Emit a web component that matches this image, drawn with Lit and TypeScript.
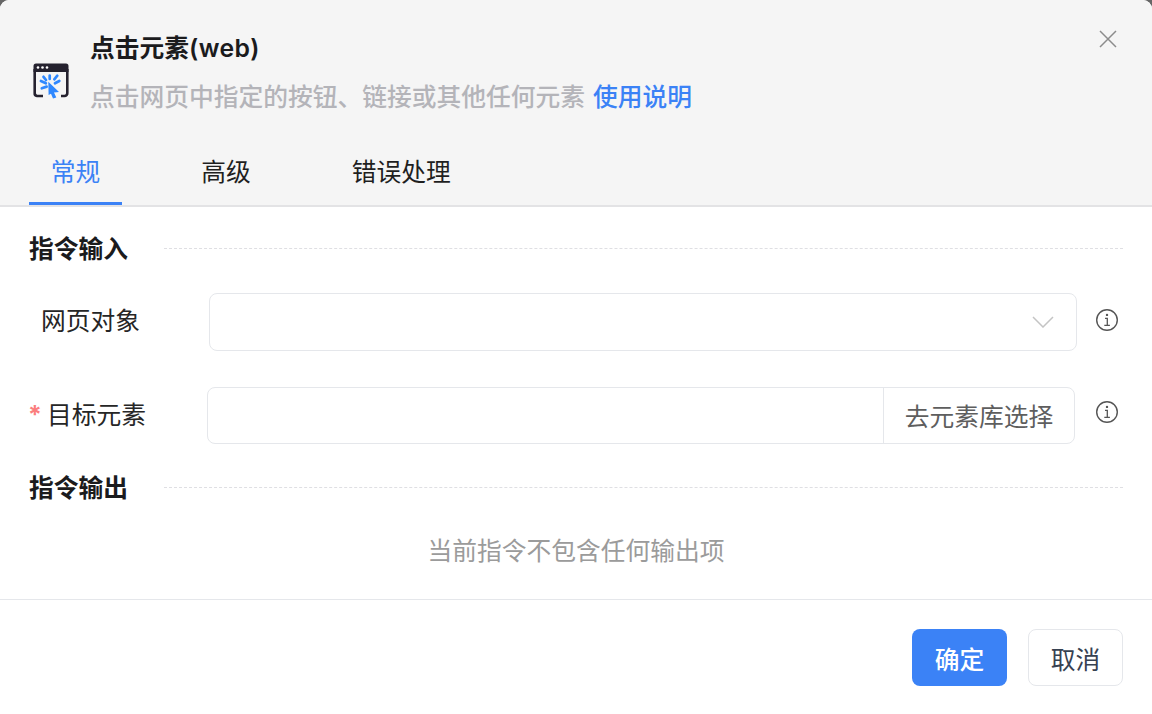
import { LitElement, html, css } from "lit";
import { customElement } from "lit/decorators.js";

const info = html`<svg class="info" viewBox="0 0 24 24" width="24" height="24" fill="none" stroke="#555" stroke-width="1.4"><circle cx="12" cy="12" r="10.3"/><path d="M10 10.400h2.300v7M9.300 17.400h5.600" stroke-width="1.300"/><circle cx="12" cy="6.900" r="1.200" fill="#555" stroke="none"/></svg>`;

@customElement("app-root")
export class AppRoot extends LitElement {
  static styles = css`
    :host { display: block; width: 1152px; height: 714px; background: #666; overflow: hidden; position: relative;
      font-family: "Inter", "Noto Sans CJK SC", sans-serif; color: #1f1f1f; font-size: 24.75px; }
    .dialog { display: flex; flex-direction: column; height: 714px; background: #fff; border-radius: 9px 9px 0 0; overflow: hidden; }
    .head { background: #f5f5f5; height: 205px; border-bottom: 2px solid #e3e3e5; box-sizing: content-box; display: flex; flex-direction: column; position: relative; }
    .title-row { display: flex; align-items: flex-start; padding: 32px 0 0 32px; }
    .logo { margin-top: 29px; width: 38px; height: 38px; flex: none; }
    .title-text { margin-left: 20px; }
    .title { font-weight: 600; line-height: 32px; color: #1b1b1d; }
    .title span { letter-spacing: 0.4px; }
    .desc { font-weight: 500; line-height: 32px; margin-top: 17px; color: #b4b4b9; white-space: nowrap; }
    .desc a { color: #3b82f6; margin-left: 8px; }
    .close { position: absolute; top: 29px; left: 1098px; width: 20px; height: 20px; }
    .tabs { display: flex; padding: 0 0 0 29px; gap: 57.5px; margin-top: auto; }
    .tab { line-height: 32px; padding: 0 21.75px 14px; border-bottom: 3px solid transparent; color: #1f1f1f; }
    .tab.on { color: #3b82f6; border-bottom-color: #3b82f6; }
    .body { flex: 1; padding: 0 29px; display: flex; flex-direction: column; }
    .section { display: flex; align-items: flex-start; height: 32px; font-weight: 600; color: #1b1b1d; line-height: 32px; }
    .section span { white-space: nowrap; width: 135px; }
    .section i { flex: 1; border-top: 1px dashed #dfdfe3; display: block; margin-top: 15px; }
    .row { display: flex; align-items: center; }
    .label { white-space: nowrap; color: #262626; line-height: 32px; padding-bottom: 2px; box-sizing: border-box; }
    .name { padding-left: 12px; width: 180px; }
    .req { width: 178px; display: flex; align-items: center; }
    .star { color: #fb7e7e; font-weight: 700; width: 18px; flex: none; margin-left: -1px; margin-right: 1px; position: relative; top: -1px; }
    .select { flex: 1; height: 58px; box-sizing: border-box; border: 1px solid #e5e7eb; border-radius: 8px; display: flex; align-items: center; justify-content: flex-end; padding-right: 22px; }
    .group { flex: 1; height: 57px; box-sizing: border-box; border: 1px solid #e5e7eb; border-radius: 8px; display: flex; }
    .group .fill { flex: 1; }
    .group .addon { border-left: 1px solid #e5e7eb; width: 191px; display: flex; align-items: center; justify-content: center; color: #5e5e5e; padding-bottom: 2px; box-sizing: border-box; }
    .info { flex: none; display: block; }
    .icon-cell { display: flex; justify-content: flex-end; padding-right: 4px; box-sizing: border-box; }
    .w46 { width: 46px; padding-bottom: 4px; }
    .w48 { width: 48px; padding-bottom: 7px; }
    .s1 { margin-top: 26px; }
    .r1 { margin-top: 28px; }
    .r2 { margin-top: 36px; }
    .s2 { margin-top: 28px; }
    .empty { text-align: center; line-height: 32px; color: #9b9b9b; margin-top: 31px; }
    .foot { border-top: 1px solid #e5e7eb; height: 115px; box-sizing: border-box; padding: 29px 29px 0 0; display: flex; justify-content: flex-end; gap: 21px; }
    .btn { width: 95px; height: 57px; box-sizing: border-box; border-radius: 8px; display: flex; align-items: center; justify-content: center; }
    .ok { background: #3b82f6; color: #fff; font-weight: 500; }
    .cancel { border: 1px solid #e5e7eb; color: #374151; background: #fff; }
  `;

  render() {
    return html`<div class="dialog">
      <div class="head">
        <div class="title-row">
          <svg class="logo" viewBox="0 0 38 38">
            <path d="M4 2.500h30a2.500 2.500 0 0 1 2.500 2.500v6H1.500V5A2.500 2.500 0 0 1 4 2.500z" fill="#25222f"/>
            <path d="M11 35H5A2.800 2.800 0 0 1 2.700 32V8M35.300 8V32A2.800 2.800 0 0 1 32.500 35H29" fill="none" stroke="#25222f" stroke-width="2.600"/>
            <circle cx="6" cy="6.500" r="1.300" fill="#fff"/><circle cx="10.500" cy="6.500" r="1.300" fill="#fff"/><circle cx="15" cy="6.500" r="1.300" fill="#fff"/>
            <path d="M17.700 14.500V18M11.500 15.800l2.500 3.200M8.900 20l5 2.300M9.800 27.300l4.900-1.700M25.300 14.700l-3 3.600M27.300 20l-4.300 2.300" stroke="#2f88ff" stroke-width="2.700" stroke-linecap="round" fill="none"/>
            <path d="M16.300 20.700L27 31l-5 .5 2.300 5-3.300 1-2-4.700-2.400 1.200z" fill="#2f88ff" stroke="#f5f5f5" stroke-width="0.600" paint-order="stroke"/>
          </svg>
          <div class="title-text">
            <div class="title">点击元素<span>(web)</span></div>
            <div class="desc">点击网页中指定的按钮、链接或其他任何元素<a>使用说明</a></div>
          </div>
        </div>
        <svg class="close" viewBox="0 0 20 20" fill="none" stroke="#8c8c8c" stroke-width="1.500"><path d="M2 2l16 16M18 2L2 18"/></svg>
        <div class="tabs">
          <div class="tab on">常规</div><div class="tab">高级</div><div class="tab">错误处理</div>
        </div>
      </div>
      <div class="body">
        <div class="section s1"><span>指令输入</span><i></i></div>
        <div class="row r1">
          <div class="label name">网页对象</div>
          <div class="select">
            <svg width="22" height="12" viewBox="0 0 22 12" fill="none" stroke="#c4c4c4" stroke-width="1.500"><path d="M1 1l10 10L21 1"/></svg>
          </div>
          <div class="icon-cell w46">${info}</div>
        </div>
        <div class="row r2">
          <div class="label req"><span class="star">*</span><span>目标元素</span></div>
          <div class="group"><div class="fill"></div><div class="addon">去元素库选择</div></div>
          <div class="icon-cell w48">${info}</div>
        </div>
        <div class="section s2"><span>指令输出</span><i></i></div>
        <div class="empty">当前指令不包含任何输出项</div>
      </div>
      <div class="foot">
        <div class="btn ok">确定</div><div class="btn cancel">取消</div>
      </div>
    </div>`;
  }
}
